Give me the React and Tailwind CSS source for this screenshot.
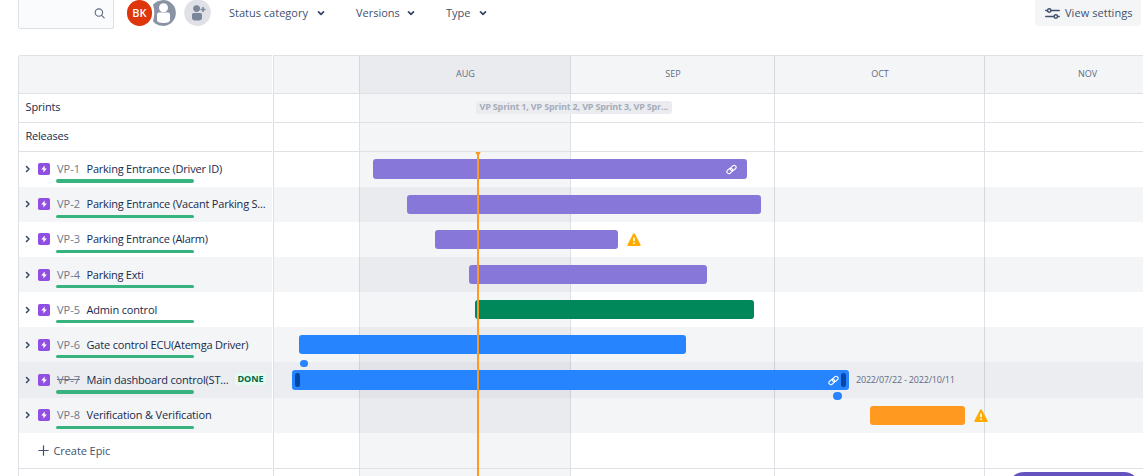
import React from "react";

const MONTHS = [
  { label: "", width: "w-[86px]", tone: "" },
  { label: "AUG", width: "w-[211px]", tone: "bg-[#091e42]/[0.045]" },
  { label: "SEP", width: "w-[204px]", tone: "" },
  { label: "OCT", width: "w-[210px]", tone: "" },
  { label: "NOV", width: "w-[205px]", tone: "" },
];

const EPICS = [
  { id: "VP-1", title: "Parking Entrance (Driver ID)", track: "tracking-[-0.22px]", row: "h-[35px]", bar: "ml-[99px] mt-[7px] h-5 w-[374px] bg-[#8777d9]", line: "mt-[27px] h-1", link: true },
  { id: "VP-2", title: "Parking Entrance (Vacant Parking S...", track: "tracking-[-0.21px]", row: "h-[35px] bg-[#091e42]/[0.045]", bar: "ml-[133px] mt-2 h-[19px] w-[354px] bg-[#8777d9]", line: "mt-7 h-[3px]" },
  { id: "VP-3", title: "Parking Entrance (Alarm)", track: "tracking-[-0.23px]", row: "h-[35px]", bar: "ml-[161px] mt-2 h-[19px] w-[183px] bg-[#8777d9]", line: "mt-7 h-[3px]", warn: true },
  { id: "VP-4", title: "Parking Exti", track: "tracking-[-0.25px]", row: "h-[35px] bg-[#091e42]/[0.045]", bar: "ml-[195px] mt-2 h-[19px] w-[238px] bg-[#8777d9]", line: "mt-7 h-[3px]", low: true },
  { id: "VP-5", title: "Admin control", track: "tracking-[-0.17px]", row: "h-[35px]", bar: "ml-[201px] mt-2 h-[19px] w-[279px] bg-[#00875a]", line: "mt-7 h-[3px]", low: true },
  { id: "VP-6", title: "Gate control ECU(Atemga Driver)", track: "tracking-[-0.18px]", row: "h-[35px] bg-[#091e42]/[0.045]", bar: "ml-[25px] mt-2 h-[19px] w-[387px] bg-[#2684ff]", line: "mt-7 h-[3px]", low: true },
  { id: "VP-7", title: "Main dashboard control(ST...", track: "tracking-[-0.19px]", row: "h-9 bg-[#091e42]/[0.08]", bar: "ml-[18px] mt-2 h-5 w-[557px] bg-[#2684ff]", line: "mt-7 h-1", link: true, active: true, done: true, low: true },
  { id: "VP-8", title: "Verification & Verification", track: "tracking-[-0.17px]", row: "h-[35px] bg-[#091e42]/[0.045]", bar: "ml-[596px] mt-2 h-[19px] w-[95px] bg-[#ff991f]", line: "mt-7 h-[3px]", warn: true },
];

function ChevronDown() {
  return (
    <svg className="size-2 shrink-0" viewBox="0 0 8 8" fill="none" stroke="#344563" strokeWidth="1.7" strokeLinecap="round" strokeLinejoin="round">
      <path d="M1.5 2.8 4 5.3 6.5 2.8" />
    </svg>
  );
}

function ChevronRight() {
  return (
    <svg className="h-2 w-1.5 shrink-0" viewBox="0 0 6 8" fill="none" stroke="#344563" strokeWidth="1.5" strokeLinecap="round" strokeLinejoin="round">
      <path d="M1.5 1.5 4 4 1.5 6.5" />
    </svg>
  );
}

function EpicIcon() {
  return (
    <svg className="size-3 shrink-0" viewBox="0 0 12 12">
      <rect width="12" height="12" rx="1.8" fill="#904ee2" />
      <path d="M6.7 2.6 3.2 6.5h2.2v2.9l3.5-4H6.7z" fill="#fff" />
    </svg>
  );
}

function LinkIcon() {
  return (
    <svg className="size-[11px] shrink-0" viewBox="0 0 12 12" fill="none" stroke="#fff" strokeWidth="1.2">
      <g transform="rotate(-40 6 6)">
        <rect x="0.1" y="3.9" width="6.8" height="4.2" rx="2.1" />
        <rect x="5.1" y="3.9" width="6.8" height="4.2" rx="2.1" />
      </g>
    </svg>
  );
}

function WarningIcon() {
  return (
    <svg className="ml-[9px] mt-[11px] h-[13px] w-3.5 shrink-0" viewBox="0 0 14 13">
      <path d="M6.1.7a1 1 0 0 1 1.8 0l5.7 11.1a.8.8 0 0 1-.7 1.2H1.1a.8.8 0 0 1-.7-1.2z" fill="#ffab00" />
      <path d="M7 4.4v3.8M7 9.5v1.6" stroke="#fff" strokeWidth="1.6" />
    </svg>
  );
}

function Filter({ label, className }) {
  return (
    <div className={`flex items-center justify-between ${className}`}>
      <span>{label}</span>
      <ChevronDown />
    </div>
  );
}

function Toolbar() {
  return (
    <header className="flex h-[55px] shrink-0 items-start text-[11px] leading-[26px] font-medium whitespace-nowrap text-[#42526e]">
      <div className="ml-[18px] flex h-[29px] w-24 justify-end rounded-b-[3px] border border-t-0 border-[#dfe1e6] bg-[#fafbfc] pt-2 pr-2">
        <svg className="size-[11px]" viewBox="0 0 11 11" fill="none" stroke="#5e6c84" strokeWidth="1.1" strokeLinecap="round">
          <circle cx="4.9" cy="4.6" r="3.7" />
          <path d="m7.6 7.3 2.6 2.6" />
        </svg>
      </div>
      <div className="ml-[13px] flex h-[26px] w-[25px] items-center justify-center rounded-full bg-[#de350b] text-[11px] font-semibold text-white">BK</div>
      <svg className="h-[26px] w-6" viewBox="0 0 24 26">
        <path d="M1 4.8A12.9 12.9 0 1 1 1 21.2Q3.6 13 1 4.8" fill="#8993a4" />
        <circle cx="11.5" cy="7.8" r="4.5" fill="#fff" />
        <path d="M5 14.6a2 2 0 0 1 2-2h9a2 2 0 0 1 2 2V20q0 3-6.5 3T5 20z" fill="#fff" />
      </svg>
      <svg className="ml-2 h-[26px] w-[27px]" viewBox="0 0 27 26">
        <circle cx="13.5" cy="12.7" r="13.3" fill="#dfe1e6" />
        <circle cx="12.6" cy="8.6" r="3.4" fill="#7a869a" />
        <path d="M8 14.6q0-1.6 1.6-1.6h6.8q1.6 0 1.6 1.6v3.6q0 2.4-5 2.4t-5-2.4z" fill="#7a869a" />
        <path d="M19 7v5M16.5 9.5h5" stroke="#7a869a" strokeWidth="1.5" />
      </svg>
      <Filter label="Status category" className="ml-[18px] w-[96px]" />
      <Filter label="Versions" className="ml-[31px] w-[59px]" />
      <Filter label="Type" className="ml-[31px] w-[41px]" />
      <div className="ml-auto mr-[2px] flex h-[26px] w-[106px] items-center rounded-b-[3px] bg-[#f4f5f7] pl-2.5">
        <svg className="mr-[5px] h-[13px] w-[15px]" viewBox="0 0 15 13" fill="none" stroke="#42526e" strokeWidth="1.5" strokeLinecap="round">
          <path d="M.8 3.5h1.4M6.2 3.5h8M.8 9.5h8M12.8 9.5h1.4" />
          <circle cx="4.2" cy="3.5" r="1.7" />
          <circle cx="10.8" cy="9.5" r="1.7" />
        </svg>
        <span className="tracking-[0.05px]">View settings</span>
      </div>
    </header>
  );
}

function EpicCell({ epic }) {
  return (
    <div className={`grid shrink-0 ${epic.row}`}>
      <div className={`col-start-1 row-start-1 flex items-center pl-1.5 ${epic.low ? "h-9" : "h-[34px]"}`}>
        <ChevronRight />
        <span className={`ml-[7px] flex ${epic.low ? "pb-px" : ""}`}><EpicIcon /></span>
        <span className="ml-[7px] w-[29.5px] text-[#6b778c]"><span className={epic.done ? "line-through" : ""}>{epic.id}</span></span>
        <span className={`text-[#172b4d] ${epic.track}`}>{epic.title}</span>
        {epic.done && (
          <span className="mr-[6px] mb-[2px] ml-auto flex h-3 w-[31px] items-center justify-center rounded-[3px] bg-[#e3fcef] text-[9px] font-bold text-[#006644]">DONE</span>
        )}
      </div>
      <div className={`col-start-1 row-start-1 ml-[37px] w-[138px] rounded-full bg-[#36b37e] ${epic.line}`} />
    </div>
  );
}

function EpicBar({ epic }) {
  return (
    <div className={`flex shrink-0 items-start ${epic.row}`}>
      <div className={`relative flex shrink-0 items-center rounded-[3px] ${epic.bar}`}>
        {epic.active && <span className="ml-[3px] h-3.5 w-[5px] rounded-full bg-[#0747a6]" />}
        {epic.link && (
          <span className={`ml-auto flex ${epic.active ? "mr-[2px]" : "mr-2.5"}`}><LinkIcon /></span>
        )}
        {epic.active && <span className="mr-[3px] h-3.5 w-[5px] rounded-full bg-[#0747a6]" />}
        {epic.active && <span className="absolute -top-2.5 left-2 h-[7px] w-[8px] rounded-full bg-[#2684ff]" />}
        {epic.active && <span className="absolute top-[22px] right-[7px] h-2 w-[9px] rounded-full bg-[#2684ff]" />}
      </div>
      {epic.warn && <WarningIcon />}
      {epic.active && <span className="ml-[7px] text-[9px] leading-[35px] tracking-[-0.19px] text-[#5e6c84]">2022/07/22 - 2022/10/11</span>}
    </div>
  );
}

export default function App() {
  return (
    <div className="relative flex h-[476px] w-[1143px] flex-col overflow-hidden bg-white font-['Open_Sans','Noto_Sans',sans-serif]">
      <Toolbar />
      <main className="ml-[18px] flex min-h-0 flex-1 text-[11px] whitespace-nowrap">
        <section className="mr-px flex w-[254px] shrink-0 flex-col rounded-tl-[3px] border-t border-l border-[#dfe1e6]">
          <div className="h-[38px] shrink-0 border-b border-[#dfe1e6] bg-[#f4f5f7]" />
          <div className="h-[29px] shrink-0 border-b border-[#dfe1e6] pl-[6.5px] leading-[25px] tracking-[-0.15px] text-[#172b4d]">Sprints</div>
          <div className="h-[29px] shrink-0 border-b border-[#dfe1e6] pl-[6.5px] leading-[25px] tracking-[-0.22px] text-[#172b4d]">Releases</div>
          {EPICS.map((epic) => <EpicCell key={epic.id} epic={epic} />)}
          <div className="flex h-9 shrink-0 items-center border-b border-[#dfe1e6] pl-[19px] tracking-[-0.08px] text-[#42526e]">
            <svg className="mr-[4.5px] size-[11px]" viewBox="0 0 11 11" stroke="#42526e" strokeWidth="1.2" strokeLinecap="round">
              <path d="M5.5.8v9.4M.8 5.5h9.4" />
            </svg>
            <span className="pt-[2px] font-medium">Create Epic</span>
          </div>
        </section>
        <section className="grid w-[870px] shrink-0 grid-cols-1 grid-rows-1 overflow-hidden border-t border-l border-[#dfe1e6]">
          <div className="col-start-1 row-start-1 flex">
            {MONTHS.map((month) => (
              <div key={month.label} className={`shrink-0 border-r border-[#dfe1e6] ${month.width} ${month.tone}`} />
            ))}
          </div>
          <div className="col-start-1 row-start-1 flex flex-col">
            <div className="flex h-[38px] shrink-0 border-b border-[#dfe1e6] bg-[#091e42]/[0.045] text-center text-[9px] leading-[36px] text-[#5e6c84]">
              {MONTHS.map((month) => <div key={month.label} className={`shrink-0 ${month.width}`}>{month.label}</div>)}
            </div>
            <div className="flex h-[29px] shrink-0 items-start border-b border-[#dfe1e6]">
              <div className="mt-[7px] ml-[202px] h-[13px] w-[196px] rounded-[3px] bg-[#ebecf0] pl-[3.5px] text-[9px] leading-[12px] font-bold tracking-[-0.17px] text-[#a5adba]">VP Sprint 1, VP Sprint 2, VP Sprint 3, VP Spr...</div>
            </div>
            <div className="h-[29px] shrink-0 border-b border-[#dfe1e6]" />
            {EPICS.map((epic) => <EpicBar key={epic.id} epic={epic} />)}
            <div className="h-9 shrink-0 border-b border-[#dfe1e6]" />
          </div>
          <svg className="z-10 col-start-1 row-start-1 mt-24 ml-[201px] h-[324px] w-1.5" viewBox="0 0 6 324">
            <path d="M.3 0h5.4L4 3v321H2V3z" fill="#ff991f" />
          </svg>
        </section>
      </main>
      <div className="absolute top-[472px] left-[1008px] h-8 w-[132px] rounded-full bg-[#6554c0]" />
    </div>
  );
}
